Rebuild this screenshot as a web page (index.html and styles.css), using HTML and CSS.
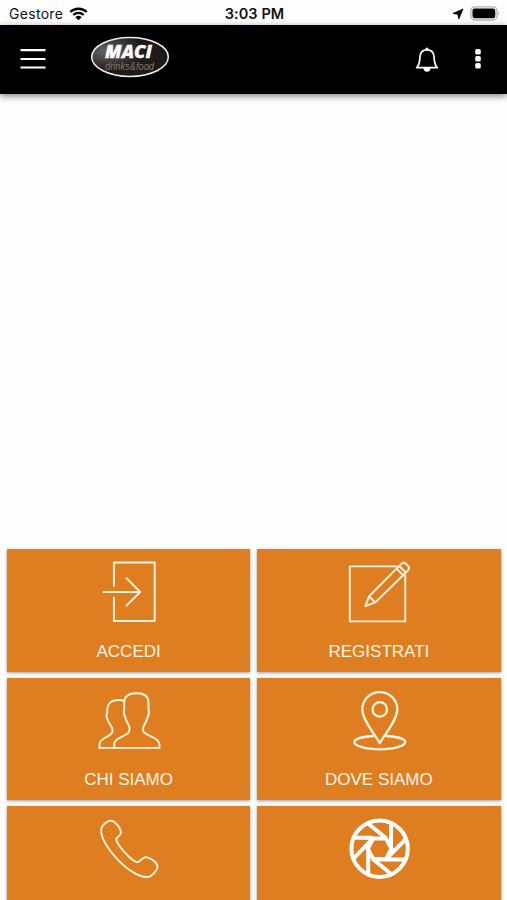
FILE: index.html
```html
<!DOCTYPE html>
<html lang="it">
<head>
<meta charset="utf-8">
<title>MACI drinks &amp; food</title>
<link rel="stylesheet" href="styles.css">
</head>
<body>
<div class="status">
  <div class="carrier"><span>Gestore</span>
    <svg width="19" height="14" viewBox="0 0 19 14"><path d="M1.3 5A11.8 11.8 0 0 1 17.7 5M4.3 8A7.4 7.4 0 0 1 14.7 8" fill="none" stroke="#000" stroke-width="2.4"/><path d="M9.5 13.3 6.4 10.2A4.6 4.6 0 0 1 12.6 10.2Z"/></svg>
  </div>
  <div class="clock">3:03 PM</div>
  <div class="indicators">
    <svg width="12" height="12" viewBox="0 0 12 12"><path d="M11 1 6.8 11 5.8 6.3 1 5.4Z" stroke="#000" stroke-width=".8" stroke-linejoin="round"/></svg>
    <svg width="31" height="15" viewBox="0 0 31 15"><rect x=".8" y=".8" width="26.2" height="13.2" rx="4" fill="#fff" stroke="#b4b4b4" stroke-width="1.3"/><rect x="2.5" y="2.5" width="22.8" height="9.8" rx="2.2"/><path d="M28.3 5.2Q30.2 7.4 28.3 9.6Z" fill="#aaa"/></svg>
  </div>
</div>
<header class="bar">
  <svg class="menu" width="26" height="22" viewBox="0 0 26 22"><path d="M.5 2.2h25M.5 11h25M.5 19.5h25" stroke="#fff" stroke-width="2.2"/></svg>
  <svg class="logo" width="80" height="42" viewBox="0 0 80 42">
    <defs><radialGradient id="sheen" cx=".18" cy=".35" r=".5"><stop offset="0" stop-color="#666"/><stop offset="1" stop-color="#1d1a19"/></radialGradient></defs>
    <ellipse cx="40" cy="21" rx="38.3" ry="19.4" fill="url(#sheen)" stroke="#eee" stroke-width="1.5"/>
    <text class="brand" x="15" y="21.5" textLength="47" lengthAdjust="spacingAndGlyphs">MACI</text>
    <text class="tagline" x="15" y="34" textLength="49" lengthAdjust="spacingAndGlyphs">drinks&amp;food</text>
  </svg>
  <svg class="bell" width="24" height="26" viewBox="0 0 24 26"><path d="M1.6 20.6C4.8 18 4.6 14 5 9.5 5.4 5.2 8 2.9 12 2.9s6.6 2.3 7 6.6c.4 4.5.2 8.5 3.4 11.1Z" fill="none" stroke="#fff" stroke-width="1.7" stroke-linejoin="round"/><circle cx="12" cy="2" r="1.5" fill="#fff"/><path d="M8.5 21h7a3.5 3.7 0 0 1-7 0Z" fill="#fff"/></svg>
  <svg class="more" width="8" height="22" viewBox="0 0 8 22" fill="#fff"><rect x="1.2" y="1" width="5.6" height="5.6" rx="1.7"/><rect x="1.2" y="8" width="5.6" height="5.6" rx="1.7"/><rect x="1.2" y="15" width="5.6" height="5.6" rx="1.7"/></svg>
</header>
<main class="tiles">
  <a class="tile">
    <svg class="icon" viewBox="0 0 80 80"><path d="M24.900 36.900V13.500H65.700V72H24.900V48.400M14.500 43H51M37.500 29.200 51.200 43 37.500 56.700"/></svg>
    <span>ACCEDI</span>
  </a>
  <a class="tile">
    <svg class="icon" viewBox="0 0 80 80"><path d="M57.500 17.400H10.800V72.400H66.300V26.500"/><path d="M26.300 57.200 30 47.500 62.500 14.600Q64.500 12.800 66.600 14.500L69.300 17.200Q71 19.200 69.200 21.200L36.300 53.400ZM30 47.500 36.300 53.400M57.500 19.600 64.100 26.200M60.200 17 66.700 23.500"/></svg>
    <span>REGISTRATI</span>
  </a>
  <a class="tile">
    <svg class="icon" viewBox="0 0 80 80"><path d="M25.200 69.900C25.200 65 25 63.500 28.500 61.200L37 56.500C41 54.500 41 51.500 40.200 48.500 39 45.500 37 43.500 36.400 39.500 34.600 36.500 34.400 34 35.200 31.500V24C35.500 17.500 41 15.200 47.400 15.200S59.300 17.500 59.500 24V31.500C60.400 34 60.200 36.500 58.400 39.500 57.700 43.500 55.800 45.500 54.500 48.500 53.500 51.500 54 54.500 57.500 56.200L66 60.500C70.500 63 70.500 65.500 70.500 69.900Z"/><path d="M35.500 23.300C33 22 30 21.900 27 22.200 21 22.800 18 26 18.200 35 17 37 17.300 39.500 19 42.200 19.500 45.500 22.500 48 23.300 50.500 24 53.500 23.500 55.500 20.500 57.200L14.500 60.700C10.500 63 10.400 65.200 10.300 69.900H25"/></svg>
    <span>CHI SIAMO</span>
  </a>
  <a class="tile">
    <svg class="icon bold" viewBox="0 0 80 80"><path d="M40.800 65.200C35.500 55.500 23.300 42 23.300 31.200a17.500 17.100 0 0 1 35 0C58.300 42 46.100 55.500 40.800 65.200Z"/><circle cx="40.800" cy="31.400" r="7.200"/><path d="M34 58C24 58.600 15.300 60.900 15.300 64.100c0 4 11.500 7.200 25.500 7.200s25.500-3.200 25.500-7.200c0-3.200-8.700-5.500-18.700-6.100"/></svg>
    <span>DOVE SIAMO</span>
  </a>
  <a class="tile">
    <svg class="icon" viewBox="0 0 80 80"><path d="M12.300 23C12.500 19.500 17.500 16 20 14.900 22.500 14 25 15.300 27 17.500 29.500 20 32 24 31.900 26.800 31.500 29.500 28.500 30.500 27.200 33 27.500 38.500 42 54.500 48 56.200 51 56 52.500 52.200 56 51.300 60 50.800 67.500 55.500 68.500 60 69 63.500 63.500 69.500 60.500 70.600 44 75 9.500 38 12.300 23Z"/></svg>
  </a>
  <a class="tile">
    <svg class="icon shutter" viewBox="0 0 80 80"><circle cx="40.600" cy="42.700" r="28.200"/><path d="M14 31.800H34M29 17.500 47.200 32.300M52 17V42.700M67.500 32.300 47.200 53.200M68 53.600H34M52.500 68.300 34 53.200M29.200 67.500V42.700M14 53.200 34 32.300"/><path d="M28.700 42.700 34.200 32.600H47L52.500 42.700 47 53H34.200Z"/></svg>
  </a>
</main>
</body>
</html>
```
FILE: styles.css
```css
* { box-sizing: border-box; }
body {
  margin: 0;
  height: 900px;
  overflow: hidden;
  background: #fefefe;
  display: flex;
  flex-direction: column;
  font-family: "Liberation Sans", Arial, sans-serif;
}
.status {
  flex: none;
  height: 25px;
  padding: 2px 7px 0 9px;
  display: grid;
  grid-template-columns: 1fr auto 1fr;
  align-items: center;
  font: 14px/20px Inter, sans-serif;
  color: #111;
}
.carrier { display: flex; align-items: center; gap: 6px; letter-spacing: .3px; }
.clock { font-weight: 600; font-size: 14.5px; letter-spacing: .1px; }
.indicators { display: flex; justify-content: flex-end; align-items: center; gap: 6px; margin-right: -1px; }
.bar {
  flex: none;
  height: 69px;
  padding: 0 25.5px 0 20px;
  display: flex;
  align-items: center;
  background: #000;
  box-shadow: 0 2px 7px rgba(0, 0, 0, .5);
}
.menu { margin-top: -2px; }
.logo { margin: -6px 0 0 44px; }
.bell { margin-left: auto; }
.more { margin: -2px 0 0 34.5px; }
.brand { font: italic 900 17px "Open Sans", sans-serif; fill: #fff; stroke: #fff; stroke-width: .3px; }
.tagline { font: italic 11px "Liberation Sans", sans-serif; fill: #86786c; }
.tiles {
  flex: none;
  margin-top: 455.3px;
  padding: 0 6.5px 0 7px;
  display: grid;
  grid-template-columns: 1fr 1fr;
  grid-auto-rows: 122.5px;
  gap: 5.9px 7px;
}
.tile {
  display: flex;
  flex-direction: column;
  align-items: center;
  background: #df7e20;
  color: #fff6e8;
  font-size: 17px;
  line-height: 20px;
  box-shadow: 0 1px 3px rgba(0, 0, 0, .4);
}
.tile span { margin-top: 12.3px; }
.icon {
  width: 80px;
  height: 80px;
  fill: none;
  stroke: #fff4e2;
  stroke-width: 1.9;
  stroke-linecap: round;
  stroke-linejoin: round;
}
.bold { stroke-width: 2.3; }
.shutter { stroke: #fff; stroke-width: 4; stroke-linecap: butt; }
```
